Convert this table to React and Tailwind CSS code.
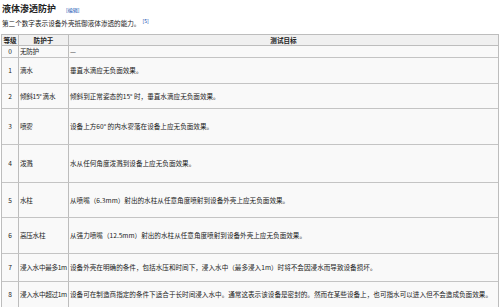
import React from "react";

const rows = [
  { n: "0", p: "无防护", t: "—", h: "h-[12px]" },
  { n: "1", p: "滴水", t: "垂直水滴应无负面效果。", h: "h-[26px]" },
  { n: "2", p: "倾斜15° 滴水", t: "倾斜到正常姿态的15° 时，垂直水滴应无负面效果。", h: "h-[25px]" },
  { n: "3", p: "喷雾", t: "设备上方60° 的内水雾落在设备上应无负面效果。", h: "h-[36px]" },
  { n: "4", p: "泼溅", t: "水从任何角度泼溅到设备上应无负面效果。", h: "h-[38px]" },
  { n: "5", p: "水柱", t: "从喷嘴（6.3mm）射出的水柱从任意角度喷射到设备外壳上应无负面效果。", h: "h-[35px]" },
  { n: "6", p: "高压水柱", t: "从强力喷嘴（12.5mm）射出的水柱从任意角度喷射到设备外壳上应无负面效果。", h: "h-[36px]" },
  { n: "7", p: "浸入水中最多1m", t: "设备外壳在明确的条件，包括水压和时间下，浸入水中（最多浸入1m）时将不会因浸水而导致设备损坏。", h: "h-[28px]" },
  { n: "8", p: "浸入水中超过1m", t: "设备可在制造商指定的条件下适合于长时间浸入水中。通常这表示该设备是密封的。然而在某些设备上，也可指水可以进入但不会造成负面效果。", h: "h-[25px]" },
];

export default function App() {
  return (
    <div
      className="w-[500px] h-[307px] bg-white text-[#222] overflow-hidden"
      style={{ fontFamily: '"Noto Sans CJK SC", "Liberation Sans", sans-serif' }}
    >
      <div className="flex items-end h-[13px] pt-[3px] pl-[2px]">
        <span className="text-[9px] leading-none font-bold">液体渗透防护</span>
        <span className="ml-[10px] text-[5px] leading-none text-[#0645ad] mb-[1px]">[编辑]</span>
      </div>
      <div className="flex items-start h-[21px] pt-[7px] pl-[2px]">
        <span className="text-[6.6px] leading-none">第二个数字表示设备外壳抵御液体渗透的能力。</span>
        <span className="text-[5px] leading-none text-[#0645ad] ml-[2px] -mt-[2px]">[5]</span>
      </div>
      <div className="ml-[1px] w-[498px] border border-[#bdbdbd] text-[6.6px] leading-none">
        <div className="flex h-[11px] bg-[#f0f0f0] border-b border-[#bdbdbd] font-bold">
          <div className="w-[17px] border-r border-[#bdbdbd] flex items-center justify-center">等级</div>
          <div className="w-[50px] border-r border-[#bdbdbd] flex items-center justify-center">防护于</div>
          <div className="flex-1 flex items-center justify-center">测试目标</div>
        </div>
        {rows.map((r, i) => (
          <div
            key={r.n}
            className={`flex ${r.h} bg-[#f9f9f9] ${i < rows.length - 1 ? "border-b border-[#c4c4c4]" : ""}`}
          >
            <div className="w-[17px] border-r border-[#bdbdbd] flex items-center justify-center">{r.n}</div>
            <div className="w-[50px] border-r border-[#bdbdbd] flex items-center pl-[1px] whitespace-nowrap overflow-hidden tracking-[-0.3px]">{r.p}</div>
            <div className="flex-1 flex items-center pl-[1px] whitespace-nowrap">{r.t}</div>
          </div>
        ))}
      </div>
    </div>
  );
}
